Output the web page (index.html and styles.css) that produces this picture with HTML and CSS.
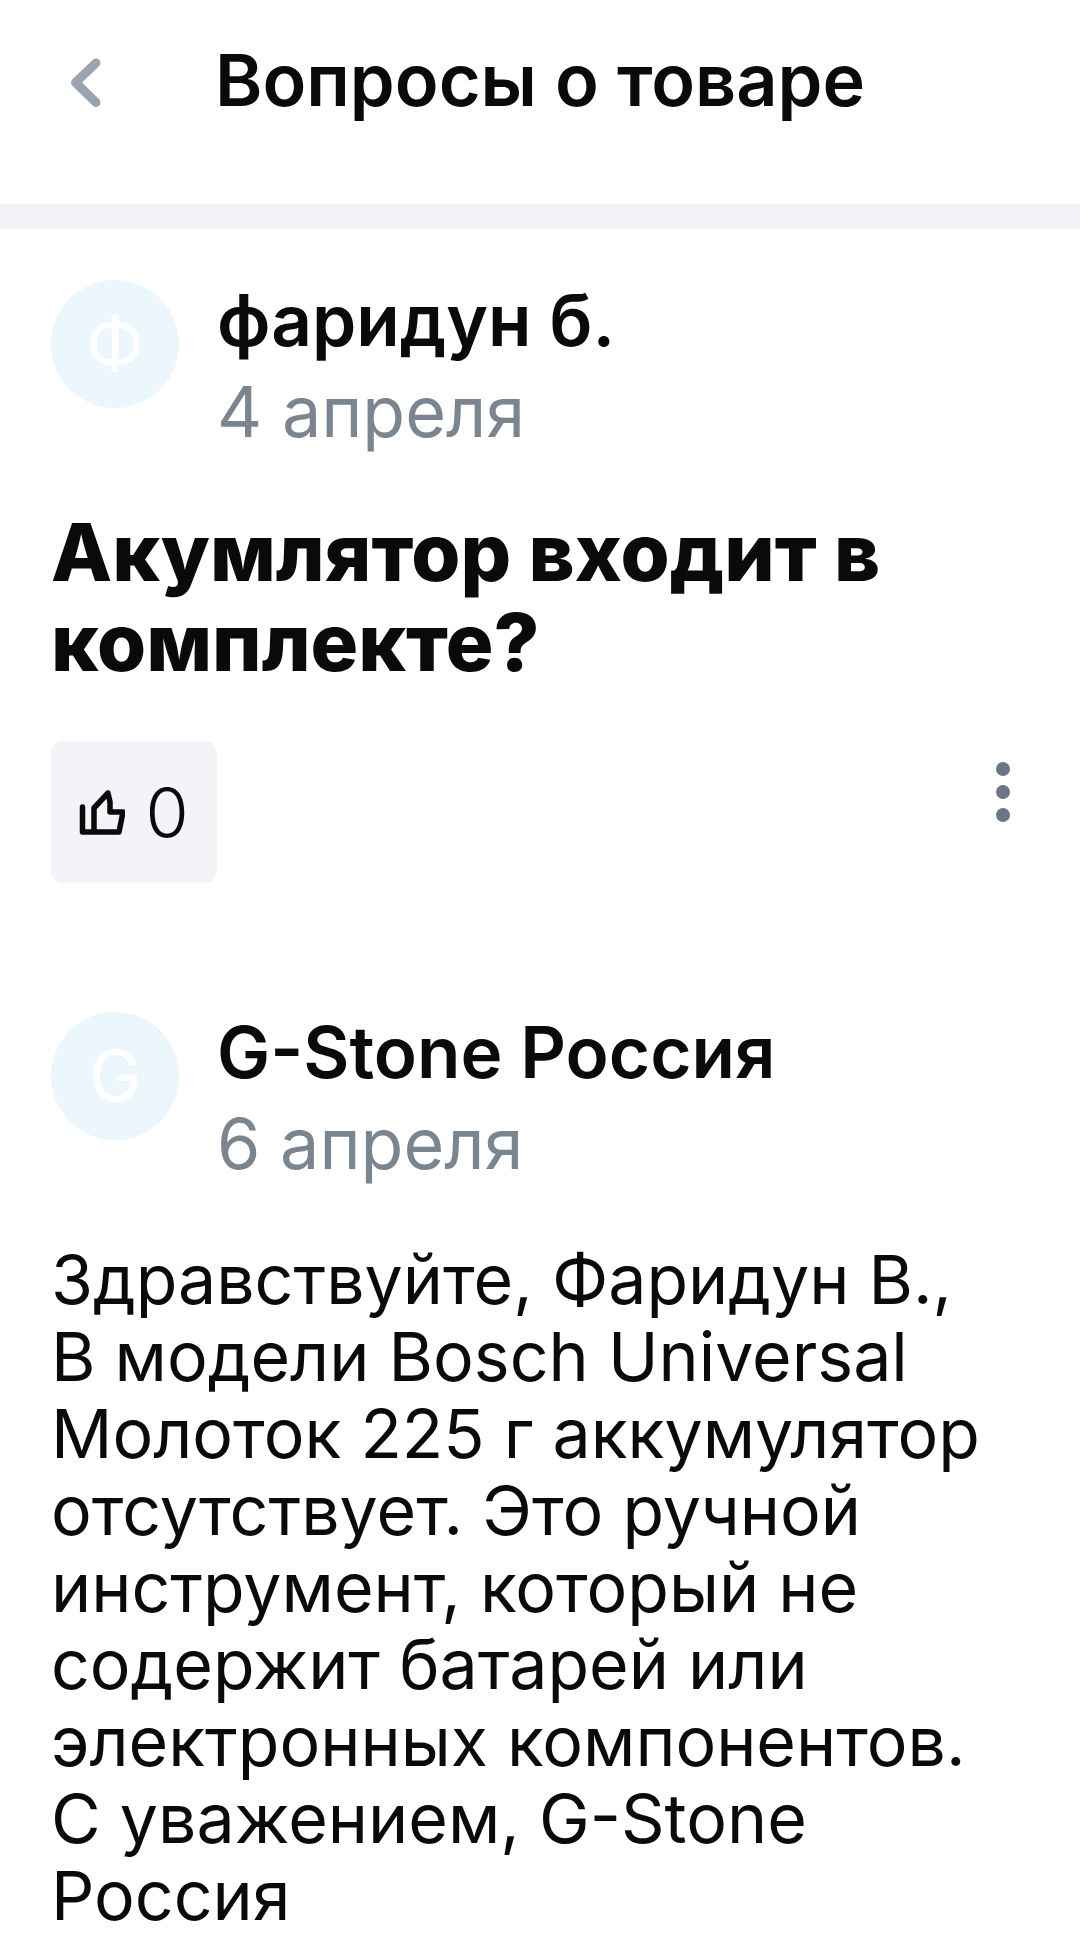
FILE: index.html
```html
<!DOCTYPE html>
<html lang="ru">
<head>
    <meta charset="UTF-8">
    <meta name="viewport" content="width=device-width, initial-scale=1.0">
    <title>Вопросы о товаре</title>
    <link rel="stylesheet" href="styles.css">
</head>
<body>
    <header class="top-bar">
        <svg class="back-icon" width="40" height="56" viewBox="0 0 40 56">
            <path d="M28 8 L7.5 27.5 L28 47.5" fill="none" stroke="#9aa4ae" stroke-width="9" stroke-linecap="round" stroke-linejoin="round"/>
        </svg>
        <h1 class="page-title">Вопросы о товаре</h1>
    </header>
    <div class="band"></div>

    <main class="content">
        <section class="question">
            <div class="author">
                <div class="avatar">Ф</div>
                <div class="author-info">
                    <div class="author-name">фаридун б.</div>
                    <div class="post-date">4 апреля</div>
                </div>
            </div>
            <h2 class="question-text">Акумлятор входит в комплекте?</h2>
            <div class="actions">
                <button class="like-btn" type="button">
                    <svg class="like-icon" width="46" height="46" viewBox="0 0 46 46">
                        <path d="M3.5 18 V43 H40 L44 23 H31 V13 L29 4 L15 19 V43" fill="none" stroke="#0a0a0a" stroke-width="5.5" stroke-linecap="round" stroke-linejoin="round"/>
                    </svg>
                    <span class="like-count">0</span>
                </button>
                <div class="more-dots">
                    <span class="dot"></span>
                    <span class="dot"></span>
                    <span class="dot"></span>
                </div>
            </div>
        </section>

        <section class="answer">
            <div class="author">
                <div class="avatar">G</div>
                <div class="author-info">
                    <div class="author-name">G-Stone Россия</div>
                    <div class="post-date">6 апреля</div>
                </div>
            </div>
            <p class="answer-text">Здравствуйте, Фаридун В.,<br>В модели Bosch Universal Молоток 225 г аккумулятор отсутствует. Это ручной инструмент, который не содержит батарей или электронных компонентов.<br>С уважением, G-Stone Россия</p>
        </section>
    </main>
</body>
</html>
```

FILE: styles.css
```css
/* General Styles */
html, body {
    margin: 0;
    padding: 0;
    background-color: #ffffff;
}

body {
    height: 1935px;
    overflow: hidden;
    font-family: Inter, "Noto Sans", sans-serif;
    color: #0a0a0a;
}

/* Header */
.top-bar {
    height: 204px;
    box-sizing: border-box;
    padding: 55px 0 0 68px;
    display: flex;
    align-items: flex-start;
}

.back-icon {
    flex-shrink: 0;
    margin-right: 107px;
}

.page-title {
    margin: -3px 0 0;
    font-size: 72px;
    line-height: 56px;
    font-weight: 600;
}

.band {
    height: 25px;
    background-color: #f0f2f6;
}

.content {
    padding: 51px 51px 0;
}

/* Author row */
.author {
    display: flex;
    gap: 38px;
}

.avatar {
    width: 128px;
    height: 128px;
    border-radius: 50%;
    flex-shrink: 0;
    background-color: #ebf6fd;
    color: #ffffff;
    font-size: 70px;
    line-height: 128px;
    text-align: center;
}

.author-info {
    margin-top: -6px;
}

.author-name {
    font-size: 71px;
    line-height: 92px;
    font-weight: 600;
}

.post-date {
    font-size: 70px;
    line-height: 92px;
    color: #7a8590;
}

/* Question */
.question-text {
    margin: 49px 0 0;
    font-size: 79.5px;
    line-height: 90px;
    font-weight: 800;
}

.actions {
    margin-top: 54px;
    display: flex;
    justify-content: space-between;
    align-items: flex-start;
}

.like-btn {
    width: 166px;
    height: 142px;
    padding: 0;
    border: none;
    border-radius: 12px;
    background-color: #f2f4f8;
    display: flex;
    align-items: center;
    justify-content: center;
    gap: 20px;
    font-family: inherit;
    font-size: 70px;
    font-weight: 300;
    color: #0a0a0a;
}

.more-dots {
    display: flex;
    flex-direction: column;
    gap: 9px;
    margin: 21px 19px 0 0;
}

.dot {
    width: 14px;
    height: 14px;
    border-radius: 50%;
    background-color: #6b7785;
}

/* Answer */
.answer {
    margin-top: 129px;
}

.answer-text {
    margin: 51px 0 0;
    font-size: 68px;
    line-height: 77px;
}
```
